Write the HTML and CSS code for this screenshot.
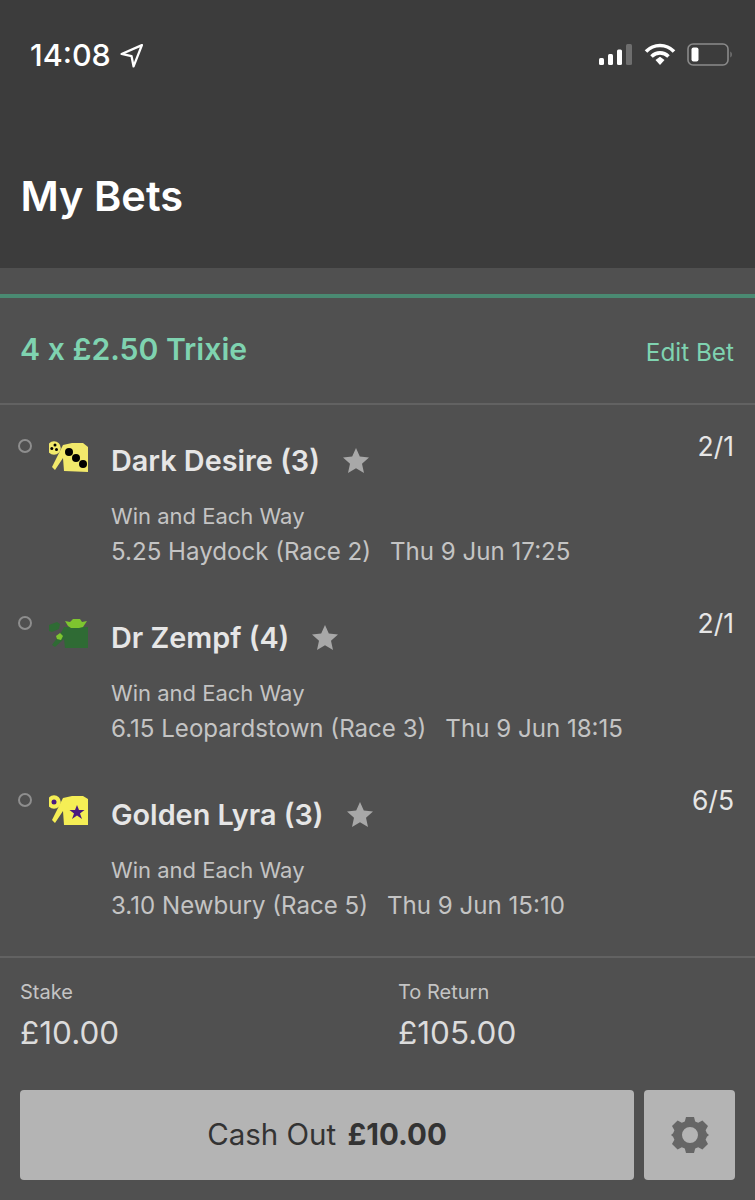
FILE: index.html
```html
<!DOCTYPE html>
<html>

<head>
    <meta name="viewport" content="width=device-width">
    <meta charset="utf-8">
    <title>My Bets</title>
    <link rel="stylesheet" href="styles.css">
</head>

<body>
    <header class="top">
        <div class="status">
            <div class="status-left">
                <span class="time">14:08</span>
                <svg class="arrow" width="25" height="25" viewBox="0 0 24 24"><path d="M22 2 2.500 10.500 12 12.500 14 22.500Z" fill="none" stroke="#fff" stroke-width="2.200" stroke-linejoin="round"/></svg>
            </div>
            <div class="status-right">
                <svg width="34" height="24" viewBox="0 0 34 24"><rect x="0" y="15" width="5" height="7" rx="1.500" fill="#fff"/><rect x="9" y="11" width="5" height="11" rx="1.500" fill="#fff"/><rect x="18" y="6.500" width="5" height="15.500" rx="1.500" fill="#fff"/><rect x="27" y="1" width="6" height="21" rx="1.500" fill="#6e6e6e"/></svg>
                <svg width="32" height="24" viewBox="0 0 32 24"><path d="M2 8.500C10 .5 22 .5 30 8.500" fill="none" stroke="#fff" stroke-width="3.600"/><path d="M7.500 13.500C12.500 8.700 19.500 8.700 24.500 13.500" fill="none" stroke="#fff" stroke-width="3.600"/><path d="M11.500 17 16 13.800 20.500 17 16 22Z" fill="#fff"/></svg>
                <svg width="46" height="24" viewBox="0 0 46 24"><rect x="1" y="1" width="40" height="21" rx="5" fill="none" stroke="#8a8a8a" stroke-width="1.600"/><rect x="4.500" y="4.500" width="7" height="14" rx="2" fill="#fff"/><path d="M43.500 8.500c1.500.7 1.500 5.300 0 6Z" fill="#8a8a8a"/></svg>
            </div>
        </div>
        <h1>My Bets</h1>
    </header>

    <main class="bet">
        <div class="bet-head">
            <h2>4 x £2.50 Trixie</h2>
            <a class="edit">Edit Bet</a>
        </div>

        <ul class="legs">
            <li class="leg">
                <span class="dot"></span>
                <svg class="silk" width="42" height="36" viewBox="0 0 42 36">
                    <path d="M14 6 23 4 34 4 39 8 39 33 15 32 14 19 6 31 3 28 13 8Z" fill="#f2e96b"/>
                    <circle cx="5" cy="9" r="6.800" fill="#f2e96b"/>
                    <circle cx="2.800" cy="9.500" r="1.500"/><circle cx="6" cy="6" r="1.500"/><circle cx="7.500" cy="10.500" r="1.500"/>
                    <circle cx="20" cy="13" r="4"/><circle cx="27" cy="19" r="4"/><circle cx="34" cy="25" r="4"/>
                </svg>
                <div class="leg-info">
                    <div class="runner"><span class="name">Dark Desire (3)</span><svg class="star" width="26" height="25" viewBox="0 0 26 25"><path d="M13 0 16.800 8.600 26 9.500 19 15.700 21 25 13 20.200 5 25 7 15.700 0 9.500 9.200 8.600Z"/></svg></div>
                    <p class="market">Win and Each Way</p>
                    <p class="race"><span>5.25 Haydock (Race 2)</span><span>Thu 9 Jun 17:25</span></p>
                </div>
                <span class="odds">2/1</span>
            </li>
            <li class="leg">
                <span class="dot"></span>
                <svg class="silk" width="42" height="36" viewBox="0 0 42 36">
                    <path d="M15 11 39 11 39 32 16 32 15 23 6 31 3 29 13 15Z" fill="#2f6b34"/>
                    <path d="M0 9 8 6 11 8 10 13 3 16 0 15Z" fill="#2f6b34"/>
                    <path d="M16 5 21 6 24 3 31 3 33 6 38 5 34 11 30 12 22 12 19 10Z" fill="#7ec52f"/>
                    <path d="M7 20 11 17 14 20 12 24 8 23Z" fill="#7ec52f"/>
                </svg>
                <div class="leg-info">
                    <div class="runner"><span class="name">Dr Zempf (4)</span><svg class="star" width="26" height="25" viewBox="0 0 26 25"><path d="M13 0 16.800 8.600 26 9.500 19 15.700 21 25 13 20.200 5 25 7 15.700 0 9.500 9.200 8.600Z"/></svg></div>
                    <p class="market">Win and Each Way</p>
                    <p class="race"><span>6.15 Leopardstown (Race 3)</span><span>Thu 9 Jun 18:15</span></p>
                </div>
                <span class="odds">2/1</span>
            </li>
            <li class="leg">
                <span class="dot"></span>
                <svg class="silk" width="42" height="36" viewBox="0 0 42 36">
                    <path d="M14 5 23 3 34 3 39 6 39 32 15 32 14 18 6 30 3 27 13 7Z" fill="#f5ee55"/>
                    <circle cx="5" cy="9" r="6.800" fill="#f5ee55"/>
                    <circle cx="5" cy="9" r="2.500" fill="#4a1a80"/>
                    <path d="M28 12 30 17 35.500 17 31 20.500 33 26 28 22.500 23 26 25 20.500 20.500 17 26 17Z" fill="#4a1a80"/>
                </svg>
                <div class="leg-info">
                    <div class="runner"><span class="name">Golden Lyra (3)</span><svg class="star" width="26" height="25" viewBox="0 0 26 25"><path d="M13 0 16.800 8.600 26 9.500 19 15.700 21 25 13 20.200 5 25 7 15.700 0 9.500 9.200 8.600Z"/></svg></div>
                    <p class="market">Win and Each Way</p>
                    <p class="race"><span>3.10 Newbury (Race 5)</span><span>Thu 9 Jun 15:10</span></p>
                </div>
                <span class="odds">6/5</span>
            </li>
        </ul>

        <div class="totals">
            <div class="total">
                <span class="total-label">Stake</span>
                <span class="total-value">£10.00</span>
            </div>
            <div class="total">
                <span class="total-label">To Return</span>
                <span class="total-value">£105.00</span>
            </div>
        </div>

        <div class="actions">
            <button class="cashout">Cash Out <strong>£10.00</strong></button>
            <button class="settings">
                <svg width="38" height="38" viewBox="0 0 38 38"><path fill="#666" fill-rule="evenodd" d="M15 1h8l1.200 4.500 3 1.300L31.400 4.500 37 10l-2.400 4.200 1.300 3L38 19l-2.100 1.800-1.300 3L37 28l-5.600 5.500-4.200-2.300-3 1.300L23 37h-8l-1.200-4.500-3-1.300-4.200 2.300L1 28l2.400-4.200-1.300-3L0 19l2.100-1.800 1.300-3L1 10l5.600-5.500 4.200 2.300 3-1.300ZM19 11a8 8 0 1 0 0 16 8 8 0 0 0 0-16Z"/></svg>
            </button>
        </div>
    </main>
</body>

</html>
```

FILE: styles.css
```css
* {
    box-sizing: border-box;
}

body {
    font-family: Inter, Roboto, sans-serif;
    margin: 0;
    padding: 0;
    height: 1200px;
    overflow: hidden;
    background-color: #505050;
    color: #fff;
}

.top {
    height: 268px;
    background-color: #3c3c3c;
    padding: 0 22px 0 30px;
}

.status {
    display: flex;
    justify-content: space-between;
    align-items: center;
    padding-top: 42px;
    height: 68px;
}

.status-left,
.status-right {
    display: flex;
    align-items: center;
}

.status-left {
    gap: 8px;
}

.status-right {
    gap: 11px;
}

.time {
    font-size: 30.500px;
    font-weight: 500;
    line-height: 26px;
}

h1 {
    margin: 104px 0 0 -9.500px;
    font-size: 41.500px;
    font-weight: 600;
    line-height: 48px;
}

.bet {
    margin-top: 26px;
    border-top: 4px solid #4a8a72;
}

.bet-head {
    display: flex;
    justify-content: space-between;
    align-items: center;
    height: 107px;
    padding: 0 21px 3px 20px;
    border-bottom: 2px solid #626262;
}

h2 {
    margin: 0;
    font-size: 30.150px;
    font-weight: 600;
    color: #7fd3b0;
}

.edit {
    font-size: 24.300px;
    color: #7fd3b0;
    margin-top: 6px;
}

.legs {
    list-style: none;
    margin: 0;
    padding: 0;
    height: 553px;
    border-bottom: 2px solid #626262;
}

.leg {
    display: flex;
    height: 177px;
    padding: 33px 21px 0 18px;
}

.dot {
    width: 14px;
    height: 14px;
    margin-top: 1px;
    border: 2px solid #8e8e8e;
    border-radius: 50%;
}

.silk {
    margin: 1px 0 0 17px;
}

.leg-info {
    flex: 1;
    margin-left: 20px;
}

.runner {
    display: flex;
    align-items: center;
    gap: 23px;
    height: 44px;
}

.name {
    font-size: 28.800px;
    font-weight: 600;
    color: #e6e6e6;
}

.star {
    fill: #a8a8a8;
}

.market,
.race {
    margin: 0;
    line-height: 36px;
    color: #c4c4c4;
}

.market {
    margin-top: 16px;
    font-size: 22px;
}

.race {
    display: flex;
    gap: 19px;
    font-size: 24.100px;
}

.odds {
    font-size: 26.500px;
    color: #e6e6e6;
    margin-top: -8px;
}

.totals {
    display: flex;
    padding: 21px 20px 0;
}

.total {
    display: flex;
    flex-direction: column;
    flex: none;
    width: 378px;
}

.total-label {
    font-size: 20px;
    line-height: 26px;
    color: #c4c4c4;
}

.total-value {
    font-size: 31.500px;
    line-height: 44px;
    margin-top: 6px;
    color: #dcdcdc;
}

.actions {
    display: flex;
    gap: 10px;
    padding: 0 20px;
    margin-top: 35px;
}

button {
    height: 90px;
    border: none;
    border-radius: 4px;
    background-color: #b4b4b4;
    font-family: inherit;
    color: #333;
}

.cashout {
    width: 614px;
    padding-bottom: 3px;
    font-size: 29.500px;
}

.cashout strong {
    margin-left: 3px;
    font-weight: 700;
}

.settings {
    width: 91px;
    display: flex;
    align-items: center;
    justify-content: center;
    padding: 0;
}
```
